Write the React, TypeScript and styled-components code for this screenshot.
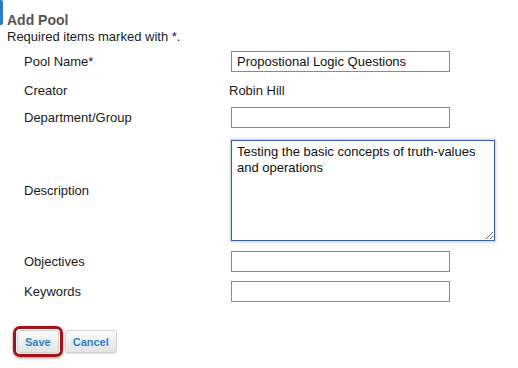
import React from "react";
import styled, { createGlobalStyle } from "styled-components";

const Global = createGlobalStyle`
  html, body { margin: 0; padding: 0; background: #fff; overflow: hidden; }
  body { font-family: Arial, "Liberation Sans", sans-serif; font-size: 13px; color: #1a1a1a; }
`;

const Page = styled.div`
  position: relative;
  width: 518px;
  height: 368px;
  padding: 12px 0 0 7px;
  box-sizing: border-box;
`;

const EdgeBar = styled.div`
  position: absolute;
  left: 0;
  top: 0;
  width: 3px;
  height: 25px;
  background: #2a7dc0;
  border-radius: 0 2px 2px 0;
`;

const Title = styled.h2`
  margin: 0;
  font-size: 14px;
  font-weight: bold;
  color: #555;
  line-height: 17px;
`;

const Note = styled.div`
  line-height: 16px;
  margin-bottom: 1px;
`;

const Form = styled.div`
  display: flex;
  flex-direction: column;
  padding-left: 17px;
`;

const Row = styled.div<{ $h?: number; $pt?: number; $pb?: number }>`
  display: flex;
  align-items: center;
  height: ${(p) => (p.$h ? `${p.$h}px` : "auto")};
  padding-top: ${(p) => p.$pt ?? 0}px;
  padding-bottom: ${(p) => p.$pb ?? 0}px;
  box-sizing: border-box;
`;

const Label = styled.div`
  width: 205px;
`;

const Value = styled.div`
  padding-left: 2px;
`;

const Text = styled.div`
  margin-left: -2px;
`;

const Input = styled.input`
  display: block;
  width: 219px;
  height: 21px;
  box-sizing: border-box;
  border: 1px solid #8a8a8a;
  padding: 0 5px;
  font-family: Arial, "Liberation Sans", sans-serif;
  font-size: 13px;
  color: #111;
  outline: none;
`;

const TextArea = styled.textarea`
  display: block;
  width: 264px;
  height: 101px;
  box-sizing: border-box;
  border: 1px solid #3d5fa3;
  box-shadow: 0 0 2px 1px #b8cdee;
  padding: 3px 5px;
  font-family: Arial, "Liberation Sans", sans-serif;
  font-size: 13px;
  line-height: 16px;
  color: #111;
  outline: none;
  resize: both;
`;

const Buttons = styled.div`
  display: flex;
  align-items: center;
  gap: 2px;
  margin-top: 20px;
  padding-left: 6px;
`;

const Highlight = styled.div`
  border: 3px solid #a3121a;
  border-radius: 7px;
  padding: 1px;
  box-shadow: 0 1px 3px rgba(0, 0, 0, 0.45);
  display: flex;
`;

const Button = styled.button`
  height: 23px;
  padding: 0 7px;
  border: 1px solid #d2d2d2;
  border-radius: 3px;
  background: linear-gradient(#fafafa, #e4e4e4);
  font-family: Arial, "Liberation Sans", sans-serif;
  font-size: 11px;
  font-weight: bold;
  color: #2b80c8;
  box-shadow: 0 1px 1px rgba(0, 0, 0, 0.12);
`;

export default function App() {
  return (
    <>
      <Global />
      <Page>
        <EdgeBar />
        <Title>Add Pool</Title>
        <Note>Required items marked with *.</Note>
        <Form>
          <Row $h={30}>
            <Label>Pool Name*</Label>
            <Value>
              <Input defaultValue="Propostional Logic Questions" />
            </Value>
          </Row>
          <Row $h={28}>
            <Label>Creator</Label>
            <Value>
              <Text>Robin Hill</Text>
            </Value>
          </Row>
          <Row $h={26}>
            <Label>Department/Group</Label>
            <Value>
              <Input />
            </Value>
          </Row>
          <Row $pt={10} $pb={5}>
            <Label>Description</Label>
            <Value>
              <TextArea defaultValue={"Testing the basic concepts of truth-values and operations"} />
            </Value>
          </Row>
          <Row $h={30}>
            <Label>Objectives</Label>
            <Value>
              <Input />
            </Value>
          </Row>
          <Row $h={30}>
            <Label>Keywords</Label>
            <Value>
              <Input />
            </Value>
          </Row>
        </Form>
        <Buttons>
          <Highlight>
            <Button>Save</Button>
          </Highlight>
          <Button>Cancel</Button>
        </Buttons>
      </Page>
    </>
  );
}
